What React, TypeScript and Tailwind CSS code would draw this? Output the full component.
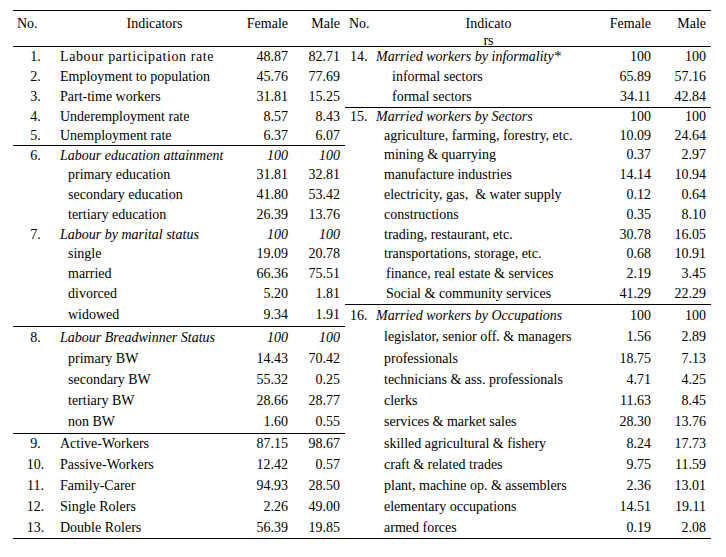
import React from "react";

type Row = {
  no?: string;
  label: string;
  f: string;
  m: string;
  head?: boolean;
  sep?: boolean;
  indent?: string;
  cls?: string;
};

const heights = [
  "h-[19.5px]",
  "h-[20px]",
  "h-[20px]",
  "h-[19px]",
  "h-[19px]",
  "h-[20px]",
  "h-[20px]",
  "h-[20px]",
  "h-[20px]",
  "h-[19.5px]",
  "h-[19px]",
  "h-[20px]",
  "h-[20.5px]",
  "h-[22px]",
  "h-[22.5px]",
  "h-[21px]",
  "h-[21px]",
  "h-[21px]",
  "h-[21.5px]",
  "h-[21.5px]",
  "h-[21px]",
  "h-[21px]",
  "h-[21px]",
  "h-[21px]",
];

const left: Row[] = [
  { no: "1.", label: "Labour participation rate", f: "48.87", m: "82.71", cls: "tracking-[0.6px]" },
  { no: "2.", label: "Employment to population", f: "45.76", m: "77.69" },
  { no: "3.", label: "Part-time workers", f: "31.81", m: "15.25" },
  { no: "4.", label: "Underemployment rate", f: "8.57", m: "8.43" },
  { no: "5.", label: "Unemployment rate", f: "6.37", m: "6.07" },
  { no: "6.", label: "Labour education attainment", f: "100", m: "100", head: true, sep: true },
  { label: "primary education", f: "31.81", m: "32.81" },
  { label: "secondary education", f: "41.80", m: "53.42" },
  { label: "tertiary education", f: "26.39", m: "13.76" },
  { no: "7.", label: "Labour by marital status", f: "100", m: "100", head: true },
  { label: "single", f: "19.09", m: "20.78" },
  { label: "married", f: "66.36", m: "75.51" },
  { label: "divorced", f: "5.20", m: "1.81" },
  { label: "widowed", f: "9.34", m: "1.91" },
  { no: "8.", label: "Labour Breadwinner Status", f: "100", m: "100", head: true, sep: true },
  { label: "primary BW", f: "14.43", m: "70.42" },
  { label: "secondary BW", f: "55.32", m: "0.25" },
  { label: "tertiary BW", f: "28.66", m: "28.77" },
  { label: "non BW", f: "1.60", m: "0.55" },
  { no: "9.", label: "Active-Workers", f: "87.15", m: "98.67", sep: true },
  { no: "10.", label: "Passive-Workers", f: "12.42", m: "0.57" },
  { no: "11.", label: "Family-Carer", f: "94.93", m: "28.50" },
  { no: "12.", label: "Single Rolers", f: "2.26", m: "49.00" },
  { no: "13.", label: "Double Rolers", f: "56.39", m: "19.85" },
];

const right: Row[] = [
  { no: "14.", label: "Married workers by informality*", f: "100", m: "100", head: true },
  { label: "informal sectors", f: "65.89", m: "57.16", indent: "pl-[16px]" },
  { label: "formal sectors", f: "34.11", m: "42.84", indent: "pl-[16px]" },
  { no: "15.", label: "Married workers by Sectors", f: "100", m: "100", head: true, sep: true },
  { label: "agriculture, farming, forestry, etc.", f: "10.09", m: "24.64" },
  { label: "mining & quarrying", f: "0.37", m: "2.97" },
  { label: "manufacture industries", f: "14.14", m: "10.94" },
  { label: "electricity, gas,  & water supply", f: "0.12", m: "0.64" },
  { label: "constructions", f: "0.35", m: "8.10" },
  { label: "trading, restaurant, etc.", f: "30.78", m: "16.05" },
  { label: "transportations, storage, etc.", f: "0.68", m: "10.91" },
  { label: "finance, real estate & services", f: "2.19", m: "3.45", indent: "pl-[10px]" },
  { label: "Social & community services", f: "41.29", m: "22.29", indent: "pl-[10px]" },
  { no: "16.", label: "Married workers by Occupations", f: "100", m: "100", head: true, sep: true },
  { label: "legislator, senior off. & managers", f: "1.56", m: "2.89" },
  { label: "professionals", f: "18.75", m: "7.13" },
  { label: "technicians & ass. professionals", f: "4.71", m: "4.25" },
  { label: "clerks", f: "11.63", m: "8.45" },
  { label: "services & market sales", f: "28.30", m: "13.76" },
  { label: "skilled agricultural & fishery", f: "8.24", m: "17.73" },
  { label: "craft & related trades", f: "9.75", m: "11.59" },
  { label: "plant, machine op. & assemblers", f: "2.36", m: "13.01" },
  { label: "elementary occupations", f: "14.51", m: "19.11" },
  { label: "armed forces", f: "0.19", m: "2.08" },
];

function LeftTable() {
  return (
    <div className="w-[332px] flex flex-col">
      <div className="h-[36px] border-b border-black flex pt-[4px] leading-[17px]">
        <div className="w-[44px] pl-[4px]">No.</div>
        <div className="flex-1 pl-[22px] text-center">Indicators</div>
        <div className="w-[58px] text-right">Female</div>
        <div className="w-[52px] text-right">Male</div>
        <div className="w-[5px]" />
      </div>
      {left.map((r, i) => (
        <div
          key={i}
          className={`${heights[i]} flex items-center leading-[19px] ${r.sep ? "border-t border-black" : ""}`}
        >
          <div className="w-[44px] text-center pl-[1px]">{r.no ?? ""}</div>
          <div
            className={`flex-1 whitespace-pre ${r.no ? "pl-[3px]" : "pl-[11px]"} ${r.head ? "italic" : ""} ${r.cls ?? ""}`}
          >
            {r.label}
          </div>
          <div className={`w-[58px] text-right ${r.head ? "italic" : ""}`}>{r.f}</div>
          <div className={`w-[52px] text-right ${r.head ? "italic" : ""}`}>{r.m}</div>
          <div className="w-[5px]" />
        </div>
      ))}
    </div>
  );
}

function RightTable() {
  return (
    <div className="w-[366px] flex flex-col">
      <div className="h-[36px] border-b border-black flex pt-[4px] leading-[17px]">
        <div className="w-[31px] pl-[4px]">No.</div>
        <div className="flex-1 text-center pl-[10px]">
          Indicato
          <br />
          rs
        </div>
        <div className="w-[60px] text-right">Female</div>
        <div className="w-[55px] text-right">Male</div>
        <div className="w-[5px]" />
      </div>
      {right.map((r, i) => (
        <div
          key={i}
          className={`${heights[i]} flex items-center leading-[19px] ${r.sep ? "border-t border-black" : ""}`}
        >
          <div className="w-[31px] pl-[5px]">{r.no ?? ""}</div>
          <div
            className={`flex-1 whitespace-pre ${r.no ? "" : r.indent ?? "pl-[8px]"} ${r.head ? "italic" : ""}`}
          >
            {r.label}
          </div>
          <div className="w-[60px] text-right">{r.f}</div>
          <div className="w-[55px] text-right">{r.m}</div>
          <div className="w-[5px]" />
        </div>
      ))}
    </div>
  );
}

export default function App() {
  return (
    <div className="w-[726px] h-[557px] bg-white text-black text-[14px] overflow-hidden font-['Liberation_Serif',_'Times_New_Roman',_serif]">
      <div className="ml-[13px] mt-[10px] w-[698px] border-t border-b border-black flex">
        <LeftTable />
        <RightTable />
      </div>
    </div>
  );
}
